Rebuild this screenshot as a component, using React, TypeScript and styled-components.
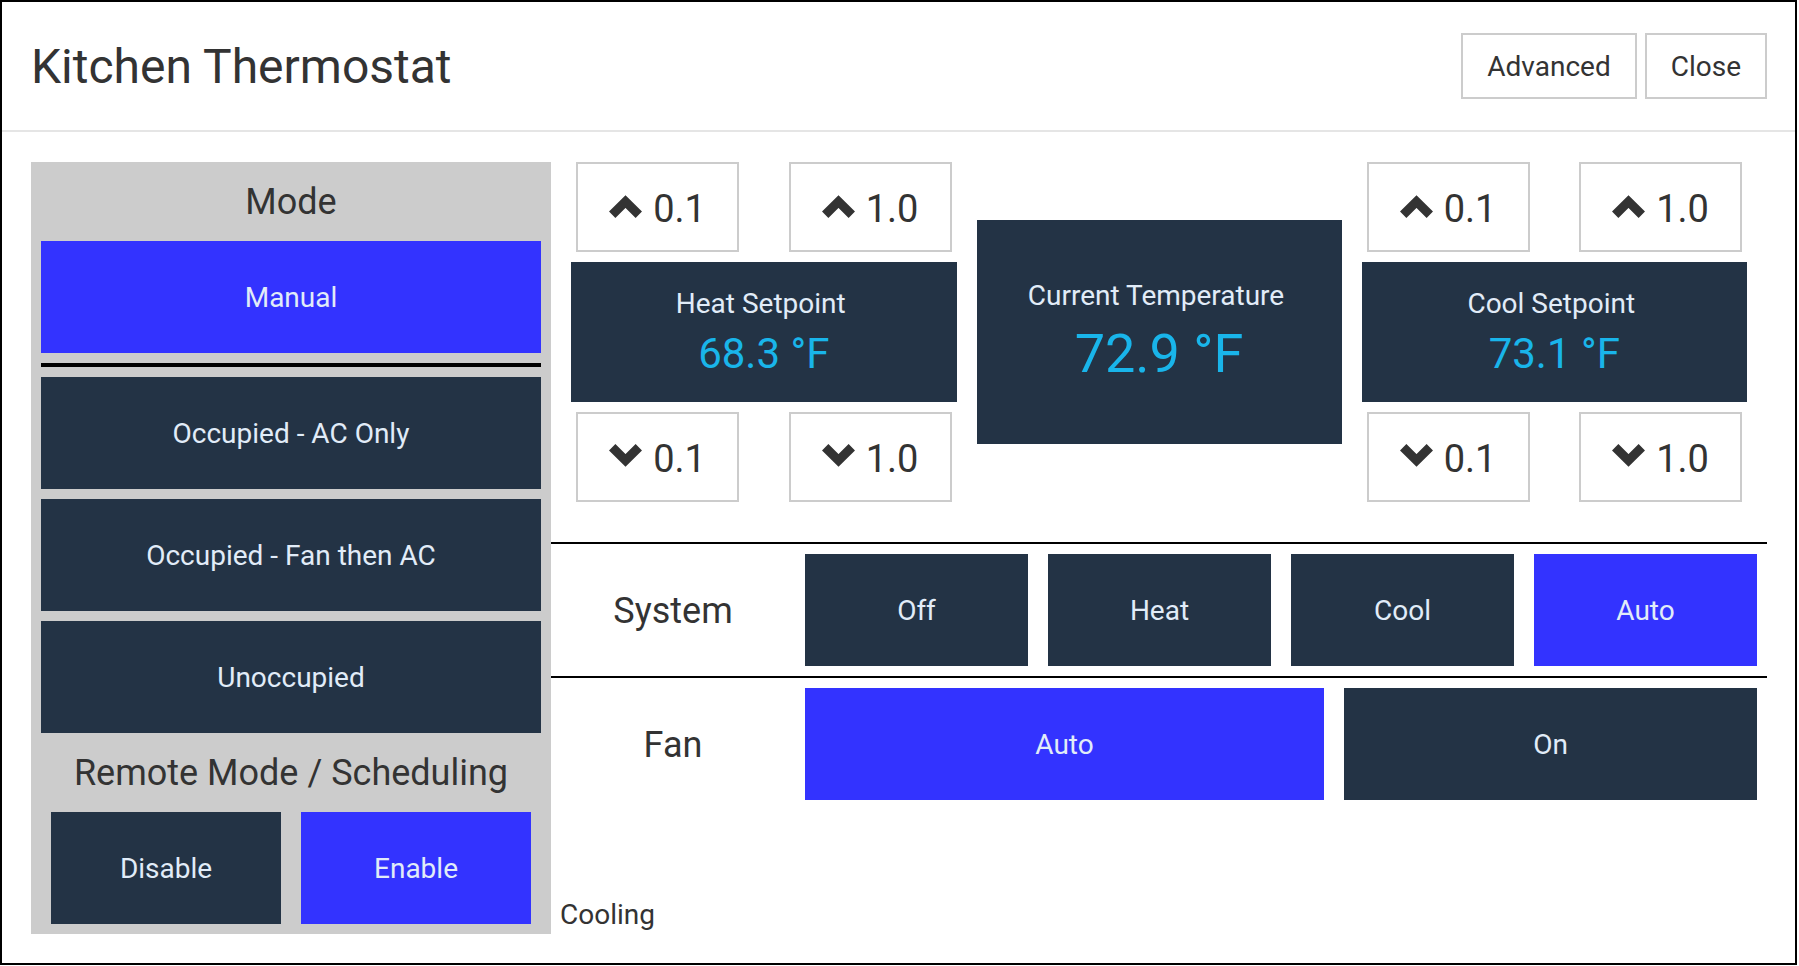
import React from "react";
import styled, { createGlobalStyle } from "styled-components";

const NAVY = "#233345";
const BLUE = "#3333ff";
const LIGHT_TEXT = "#e1ecf8";
const VALUE = "#19b5ea";

const GlobalStyle = createGlobalStyle`
  html, body { margin: 0; padding: 0; background: #fff; }
  body { font-family: Roboto, "Noto Sans", Arial, sans-serif; color: #333; }
  *, *::before, *::after { box-sizing: border-box; }
  button { font-family: inherit; margin: 0; }
`;

const Dialog = styled.div`
  width: 1797px;
  height: 965px;
  border: 2px solid #000;
  background: #fff;
  display: flex;
  flex-direction: column;
`;

const Header = styled.header`
  height: 130px;
  flex: 0 0 auto;
  display: flex;
  align-items: center;
  justify-content: space-between;
  padding: 0 28px 0 29px;
  border-bottom: 2px solid #e5e5e5;
`;

const Title = styled.h1`
  margin: 0;
  font-size: 48px;
  font-weight: 400;
  color: #333;
  line-height: normal;
`;

const HeaderActions = styled.div`
  display: flex;
  gap: 8px;
`;

const HeaderButton = styled.button`
  height: 66px;
  padding: 0 24px;
  border: 2px solid #cccccc;
  background: #fff;
  color: #333;
  font-size: 28px;
  cursor: pointer;
`;

const Body = styled.div`
  flex: 1;
  display: flex;
  padding: 30px 28px 29px 29px;
`;

const ModePanel = styled.section`
  width: 520px;
  flex: 0 0 520px;
  background: #cccccc;
  padding: 0 10px 10px;
  display: flex;
  flex-direction: column;
`;

const PanelTitle = styled.div`
  text-align: center;
  font-size: 36px;
  line-height: normal;
  color: #333;
  padding: 19px 0 18px;
`;

const ModeList = styled.div`
  display: flex;
  flex-direction: column;
  gap: 10px;
`;

const Separator = styled.div`
  height: 4px;
  background: #000;
`;

const BlockButton = styled.button<{ $active?: boolean }>`
  height: 112px;
  border: none;
  background: ${(p) => (p.$active ? BLUE : NAVY)};
  color: ${LIGHT_TEXT};
  font-size: 28px;
  display: flex;
  align-items: center;
  justify-content: center;
  cursor: pointer;
`;

const RemoteRow = styled.div`
  display: flex;
  gap: 20px;
  padding: 0 10px;
  & > * { flex: 1; }
`;

const RightColumn = styled.section`
  flex: 1;
  display: flex;
  flex-direction: column;
`;

const SetpointRow = styled.div`
  display: flex;
  align-items: center;
  gap: 20px;
  padding: 0 20px;
`;

const SetpointGroup = styled.div`
  flex: 1;
  display: flex;
  flex-direction: column;
  gap: 10px;
`;

const StepRow = styled.div`
  display: flex;
  justify-content: space-between;
  padding: 0 5px;
`;

const StepButton = styled.button`
  width: 163px;
  height: 90px;
  border: 2px solid #cccccc;
  background: #fff;
  color: #333;
  font-size: 38px;
  display: flex;
  align-items: center;
  justify-content: center;
  gap: 11px;
  padding: 3px 0 0;
  cursor: pointer;
`;

const ChevronSvg = styled.svg<{ $down?: boolean }>`
  width: 33px;
  height: 23px;
  flex: 0 0 auto;
  margin-bottom: ${(p) => (p.$down ? 7 : 5)}px;
  transform: ${(p) => (p.$down ? "rotate(180deg)" : "none")};
`;

const TempBox = styled.div<{ $height: number; $gap: number }>`
  height: ${(p) => p.$height}px;
  background: ${NAVY};
  display: flex;
  flex-direction: column;
  align-items: center;
  justify-content: center;
  gap: ${(p) => p.$gap}px;
`;

const CurrentBox = styled(TempBox)`
  flex: 0 0 365px;
`;

const TempLabel = styled.div`
  font-size: 28px;
  line-height: normal;
  color: ${LIGHT_TEXT};
  padding-right: 6px;
`;

const TempValue = styled.div<{ $size: number }>`
  font-size: ${(p) => p.$size}px;
  line-height: normal;
  color: ${VALUE};
`;

const ControlRow = styled.div<{ $bordered?: boolean }>`
  display: grid;
  grid-template-columns: 244px 1fr;
  column-gap: 10px;
  align-items: center;
  padding: 10px 10px 10px 0;
  border-top: ${(p) => (p.$bordered ? "2px solid #000" : "none")};
  border-bottom: ${(p) => (p.$bordered ? "2px solid #000" : "none")};
`;

const SystemRow = styled(ControlRow)`
  margin-top: 40px;
`;

const RowLabel = styled.div`
  text-align: center;
  font-size: 36px;
  line-height: normal;
  color: #333;
  padding-top: 2px;
`;

const ButtonStrip = styled.div`
  display: flex;
  gap: 20px;
`;

const StripButton = styled(BlockButton)<{ $grow?: number }>`
  flex: ${(p) => p.$grow ?? 1} 1 0;
  padding-top: 2px;
`;

const Status = styled.div`
  margin-top: auto;
  font-size: 28px;
  line-height: normal;
  color: #333;
  padding: 0 0 3px 9px;
`;

function Chevron({ down }: { down?: boolean }) {
  return (
    <ChevronSvg $down={down} viewBox="0 -1 33 23" aria-hidden="true">
      <polyline
        points="3.2,18.8 16.5,5.5 29.8,18.8"
        fill="none"
        stroke="#333"
        strokeWidth={9}
        strokeLinejoin="miter"
        strokeLinecap="butt"
      />
    </ChevronSvg>
  );
}

function Step({ up, label }: { up: boolean; label: string }) {
  return (
    <StepButton>
      <Chevron down={!up} />
      <span>{label}</span>
    </StepButton>
  );
}

function Setpoint({ label, value }: { label: string; value: string }) {
  return (
    <SetpointGroup>
      <StepRow>
        <Step up label="0.1" />
        <Step up label="1.0" />
      </StepRow>
      <TempBox $height={140} $gap={9}>
        <TempLabel>{label}</TempLabel>
        <TempValue $size={42}>{value}</TempValue>
      </TempBox>
      <StepRow>
        <Step up={false} label="0.1" />
        <Step up={false} label="1.0" />
      </StepRow>
    </SetpointGroup>
  );
}

const modes = ["Occupied - AC Only", "Occupied - Fan then AC", "Unoccupied"];
const systems = ["Off", "Heat", "Cool", "Auto"];

export default function App() {
  return (
    <>
      <GlobalStyle />
      <Dialog>
        <Header>
          <Title>Kitchen Thermostat</Title>
          <HeaderActions>
            <HeaderButton>Advanced</HeaderButton>
            <HeaderButton>Close</HeaderButton>
          </HeaderActions>
        </Header>
        <Body>
          <ModePanel>
            <PanelTitle>Mode</PanelTitle>
            <ModeList>
              <BlockButton $active>Manual</BlockButton>
              <Separator />
              {modes.map((m) => (
                <BlockButton key={m}>{m}</BlockButton>
              ))}
            </ModeList>
            <PanelTitle>Remote Mode / Scheduling</PanelTitle>
            <RemoteRow>
              <BlockButton>Disable</BlockButton>
              <BlockButton $active>Enable</BlockButton>
            </RemoteRow>
          </ModePanel>
          <RightColumn>
            <SetpointRow>
              <Setpoint label="Heat Setpoint" value="68.3 °F" />
              <CurrentBox $height={224} $gap={10}>
                <TempLabel>Current Temperature</TempLabel>
                <TempValue $size={54}>72.9 °F</TempValue>
              </CurrentBox>
              <Setpoint label="Cool Setpoint" value="73.1 °F" />
            </SetpointRow>
            <SystemRow $bordered>
              <RowLabel>System</RowLabel>
              <ButtonStrip>
                {systems.map((s) => (
                  <StripButton key={s} $active={s === "Auto"}>
                    {s}
                  </StripButton>
                ))}
              </ButtonStrip>
            </SystemRow>
            <ControlRow>
              <RowLabel>Fan</RowLabel>
              <ButtonStrip>
                <StripButton $active $grow={521}>Auto</StripButton>
                <StripButton $grow={412}>On</StripButton>
              </ButtonStrip>
            </ControlRow>
            <Status>Cooling</Status>
          </RightColumn>
        </Body>
      </Dialog>
    </>
  );
}
